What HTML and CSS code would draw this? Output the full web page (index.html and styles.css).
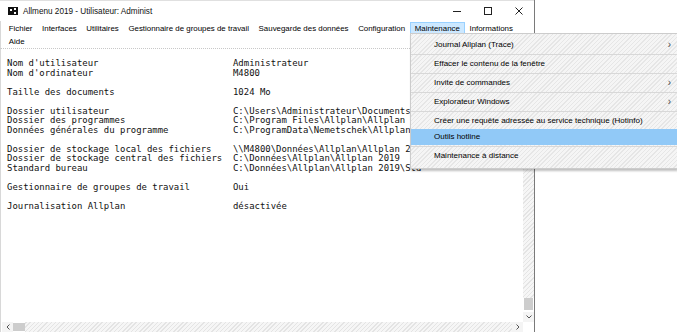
FILE: index.html
```html
<!DOCTYPE html>
<html lang="fr">
<head>
    <meta charset="UTF-8">
    <meta name="viewport" content="width=device-width, initial-scale=1.0">
    <title>Allmenu 2019</title>
    <link rel="stylesheet" href="styles.css">
</head>
<body>
    <div class="screen">
        <div class="window">
            <div class="titlebar">
                <svg class="app-icon" width="10" height="8" viewBox="0 0 10 8">
                    <rect x="0" y="0" width="10" height="8" fill="#111"/>
                    <rect x="2" y="2" width="2" height="2" fill="#fff"/>
                    <rect x="6" y="1" width="2" height="2" fill="#fff"/>
                    <rect x="6" y="5" width="2" height="2" fill="#fff"/>
                </svg>
                <span class="title">Allmenu 2019 - Utilisateur: Administ</span>
                <div class="controls">
                    <span class="ctl">
                        <svg width="8" height="8" viewBox="0 0 8 8"><line x1="0" y1="4.5" x2="8" y2="4.5" stroke="#222" stroke-width="1"/></svg>
                    </span>
                    <span class="ctl">
                        <svg width="8" height="8" viewBox="0 0 8 8"><rect x="0.5" y="0.5" width="7" height="7" fill="none" stroke="#222" stroke-width="1"/></svg>
                    </span>
                    <span class="ctl">
                        <svg width="8" height="8" viewBox="0 0 8 8"><path d="M0.5 0.5 L7.5 7.5 M7.5 0.5 L0.5 7.5" stroke="#222" stroke-width="1"/></svg>
                    </span>
                </div>
            </div>

            <div class="menubar">
                <div class="menurow">
                    <span class="menu-item">Fichier</span>
                    <span class="menu-item">Interfaces</span>
                    <span class="menu-item">Utilitaires</span>
                    <span class="menu-item">Gestionnaire de groupes de travail</span>
                    <span class="menu-item">Sauvegarde des données</span>
                    <span class="menu-item">Configuration</span>
                    <span class="menu-item open">Maintenance</span>
                    <span class="menu-item">Informations</span>
                </div>
                <div class="menurow">
                    <span class="menu-item">Aide</span>
                </div>
            </div>

            <div class="main">
                <div class="view">
                    <div class="console">
                        <div class="line"><span class="key">Nom d'utilisateur</span><span>Administrateur</span></div>
                        <div class="line"><span class="key">Nom d'ordinateur</span><span>M4800</span></div>
                        <div class="blank"></div>
                        <div class="line"><span class="key">Taille des documents</span><span>1024 Mo</span></div>
                        <div class="blank"></div>
                        <div class="line"><span class="key">Dossier utilisateur</span><span>C:\Users\Administrateur\Documents\Nemetschek\Allplan\2019\Usr\Local</span></div>
                        <div class="line"><span class="key">Dossier des programmes</span><span>C:\Program Files\Allplan\Allplan 2019\Prg</span></div>
                        <div class="line"><span class="key">Données générales du programme</span><span>C:\ProgramData\Nemetschek\Allplan\2019\Etc</span></div>
                        <div class="blank"></div>
                        <div class="line"><span class="key">Dossier de stockage local des fichiers</span><span>\\M4800\Données\Allplan\Allplan 2019\Prj</span></div>
                        <div class="line"><span class="key">Dossier de stockage central des fichiers</span><span>C:\Données\Allplan\Allplan 2019</span></div>
                        <div class="line"><span class="key">Standard bureau</span><span>C:\Données\Allplan\Allplan 2019\Std</span></div>
                        <div class="blank"></div>
                        <div class="line"><span class="key">Gestionnaire de groupes de travail</span><span>Oui</span></div>
                        <div class="blank"></div>
                        <div class="line"><span class="key">Journalisation Allplan</span><span>désactivée</span></div>
                    </div>
                    <div class="vscroll">
                        <div class="vtrack"></div>
                        <div class="vthumb"></div>
                        <div class="arrow">
                            <svg width="6" height="4" viewBox="0 0 6 4"><path d="M0.5 0.5 L3 3 L5.5 0.5" fill="none" stroke="#555" stroke-width="1"/></svg>
                        </div>
                    </div>
                </div>
                <div class="hscroll">
                    <div class="arrow">
                        <svg width="4" height="6" viewBox="0 0 4 6"><path d="M3.5 0.5 L1 3 L3.5 5.5" fill="none" stroke="#555" stroke-width="1"/></svg>
                    </div>
                    <div class="hthumb"></div>
                    <div class="htrack"></div>
                    <div class="arrow">
                        <svg width="4" height="6" viewBox="0 0 4 6"><path d="M0.5 0.5 L3 3 L0.5 5.5" fill="none" stroke="#555" stroke-width="1"/></svg>
                    </div>
                </div>
            </div>
        </div>

        <!-- open "Maintenance" menu -->
        <div class="dropdown">
            <div class="drop-item">Journal Allplan (Trace)<span class="chev">›</span></div>
            <div class="sep"></div>
            <div class="drop-item">Effacer le contenu de la fenêtre</div>
            <div class="sep"></div>
            <div class="drop-item">Invite de commandes<span class="chev">›</span></div>
            <div class="sep"></div>
            <div class="drop-item">Explorateur Windows<span class="chev">›</span></div>
            <div class="sep"></div>
            <div class="drop-item">Créer une requête adressée au service technique (Hotinfo)</div>
            <div class="drop-item hover">Outils hotline</div>
            <div class="sep"></div>
            <div class="drop-item">Maintenance à distance</div>
        </div>
    </div>
</body>
</html>
```

FILE: styles.css
```css
body {
    margin: 0;
    background: #fff;
    font-family: "Liberation Sans", Arial, sans-serif;
    font-size: 8px;
    color: #000;
}

.screen {
    position: relative;
    width: 677px;
    height: 332px;
    overflow: hidden;
}

.window {
    width: 534px;
    height: 332px;
    border-right: 1px solid #7a7a7a;
    display: flex;
    flex-direction: column;
    background: #fff;
}

.titlebar {
    height: 21px;
    display: flex;
    align-items: center;
    border-top: 1px solid #e0e0e0;
    box-sizing: border-box;
}

.app-icon {
    margin-left: 8px;
    margin-right: 5px;
}

.title {
    font-size: 8.2px;
    color: #111;
}

.controls {
    margin-left: auto;
    display: flex;
}

.ctl {
    width: 31px;
    height: 20px;
    display: flex;
    align-items: center;
    justify-content: center;
}

.menubar {
    padding-left: 3px;
    padding-top: 1px;
    border-bottom: 1px dotted #c8c8c8;
    border-left: 1px solid #d8d8d8;
    height: 26px;
}

.menurow {
    display: flex;
    height: 13px;
}

.menu-item {
    padding: 0 3.8px;
    font-size: 7.9px;
    line-height: 12px;
    border: 1px solid transparent;
    white-space: nowrap;
}

.menu-item.open {
    background: #cce8ff;
    border-color: #99d1ff;
}

.main {
    flex: 1;
    display: flex;
    flex-direction: column;
    border-left: 1px solid #d8d8d8;
    min-height: 0;
}

.view {
    flex: 1;
    display: flex;
    min-height: 0;
}

.console {
    flex: 1;
    overflow: hidden;
    padding: 10px 0 0 6px;
    font-family: "DejaVu Sans Mono", "Liberation Mono", monospace;
    font-size: 8.95px;
    line-height: 9.5px;
    color: #111;
}

.line {
    display: grid;
    grid-template-columns: 42ch 1fr;
    white-space: pre;
}

.blank {
    height: 9.5px;
}

.vscroll {
    width: 11px;
    display: flex;
    flex-direction: column;
}

.vtrack,
.htrack {
    flex: 1;
    background: repeating-linear-gradient(-45deg, #f6f6f6 0 2px, #e4e4e4 2px 3px);
}

.vthumb {
    height: 12px;
    background: #cdcdcd;
    margin: 0 1px 2px;
}

.arrow {
    display: flex;
    align-items: center;
    justify-content: center;
    width: 11px;
    height: 10px;
    background: #f4f4f4;
}

.hscroll {
    height: 10px;
    display: flex;
    padding-left: 1px;
    padding-right: 11px;
}

.hthumb {
    width: 12px;
    background: #cdcdcd;
    margin: 1px 0;
}

.dropdown {
    position: absolute;
    left: 410px;
    top: 33px;
    width: 267px;
    box-sizing: border-box;
    padding: 3px 0 4px;
    border: 1px solid #cccccc;
    border-right: none;
    background: repeating-linear-gradient(-45deg, #f5f5f5 0 2px, #e6e6e6 2px 3px);
    box-shadow: 1px 2px 2px rgba(0, 0, 0, 0.25);
}

.drop-item {
    height: 16px;
    line-height: 16px;
    padding-left: 23px;
    position: relative;
    white-space: nowrap;
}

.drop-item.hover {
    background: #91c9f7;
}

.chev {
    position: absolute;
    right: 6px;
    top: 0;
    font-size: 10px;
    color: #444;
}

.sep {
    height: 0;
    margin: 1px 0;
    border-bottom: 1px solid #d8d8d8;
}
```
